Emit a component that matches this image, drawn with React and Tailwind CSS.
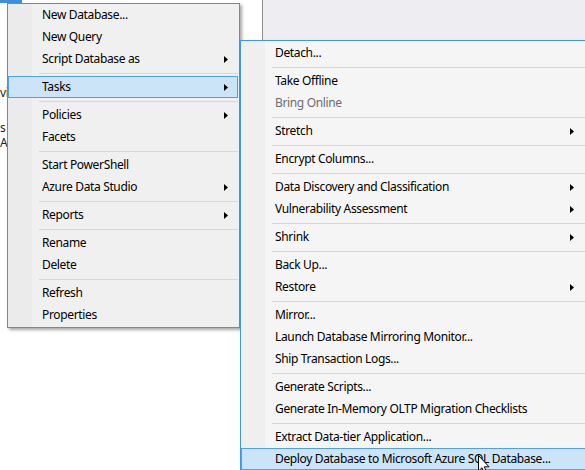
import React from "react";

const leftItems = [
  { t: "New Database..." },
  { t: "New Query" },
  { t: "Script Database as", sub: true },
  "sep",
  { t: "Tasks", sub: true, hl: true },
  "sep",
  { t: "Policies", sub: true },
  { t: "Facets" },
  "sep",
  { t: "Start PowerShell" },
  { t: "Azure Data Studio", sub: true },
  "sep",
  { t: "Reports", sub: true },
  "sep",
  { t: "Rename" },
  { t: "Delete" },
  "sep",
  { t: "Refresh" },
  { t: "Properties" },
];

const rightItems = [
  { t: "Detach..." },
  "sep",
  { t: "Take Offline" },
  { t: "Bring Online", dis: true },
  "sep",
  { t: "Stretch", sub: true },
  "sep",
  { t: "Encrypt Columns..." },
  "sep",
  { t: "Data Discovery and Classification", sub: true },
  { t: "Vulnerability Assessment", sub: true },
  "sep",
  { t: "Shrink", sub: true },
  "sep",
  { t: "Back Up..." },
  { t: "Restore", sub: true },
  "sep",
  { t: "Mirror..." },
  { t: "Launch Database Mirroring Monitor..." },
  { t: "Ship Transaction Logs..." },
  "sep",
  { t: "Generate Scripts..." },
  { t: "Generate In-Memory OLTP Migration Checklists" },
  "sep",
  { t: "Extract Data-tier Application..." },
  { t: "Deploy Database to Microsoft Azure SQL Database...", hl: true },
];

function Arrow() {
  return (
    <svg width="4" height="7" viewBox="0 0 4 7" className="shrink-0">
      <path d="M0 0 L4 3.5 L0 7 Z" fill="#000" />
    </svg>
  );
}

function MenuList({ items, arrowPad }) {
  return (
    <>
      {items.map((it, i) =>
        it === "sep" ? (
          <div key={i} className="h-[6px] flex items-center pl-[31px] pr-px">
            <div className="h-px w-full bg-[#d7d7d7]" />
          </div>
        ) : (
          <div
            key={i}
            className={
              "h-[22px] mr-px flex items-center pl-[33px] border " +
              (it.hl
                ? "bg-[#cce4f7] border-[#4fa0ea]"
                : "border-transparent")
            }
          >
            <span
              className={
                "flex-1 whitespace-nowrap pb-px " +
                (it.dis ? "text-[#6d6d6d]" : "text-[#000]")
              }
            >
              {it.t}
            </span>
            {it.sub ? (
              <span className={arrowPad}>
                <Arrow />
              </span>
            ) : null}
          </div>
        )
      )}
    </>
  );
}

export default function App() {
  return (
    <div className="relative w-[585px] h-[470px] overflow-hidden bg-white text-[12px] leading-none tracking-[-0.35px] font-['Noto_Sans',sans-serif]">
      {/* background window */}
      <div className="flex h-full">
        <div className="w-[262px] h-full bg-white flex flex-col">
          <div className="w-[22px] h-[3px] bg-[#3d8fdc]" />
          <div className="mt-[83px] text-[#1e1e1e] leading-[14px]">vi</div>
          <div className="mt-[20px] text-[#1e1e1e] leading-[15px]">
            s
            <br />
            A
          </div>
        </div>
        <div className="flex-1 h-full border-l border-[#8e8e8e] bg-[#eeeef2]" />
      </div>

      {/* left context menu */}
      <div className="absolute left-[7px] top-[3px] w-[233px] border border-[#3d97ee] pb-px bg-[linear-gradient(to_right,#ebebeb_24px,#f0f0f0_24px)] shadow-[2px_2px_3px_rgba(0,0,0,0.35)]">
        <MenuList items={leftItems} arrowPad="pr-[9px]" />
      </div>

      {/* right submenu */}
      <div className="absolute left-[240px] top-[40px] w-[348px] border border-[#3d97ee] pt-px bg-[linear-gradient(to_right,#efefef_24px,#f5f5f5_24px)] shadow-[2px_2px_3px_rgba(0,0,0,0.35)]">
        <MenuList items={rightItems} arrowPad="pr-[11px]" />
      </div>

      {/* mouse cursor */}
      <svg
        className="absolute left-[478px] top-[455px]"
        width="13"
        height="20"
        viewBox="0 0 13 20"
      >
        <path
          d="M0.5 0.5 L0.5 16 L4 12.7 L6.6 18.6 L8.8 17.6 L6.3 11.8 L11 11.8 Z"
          fill="#fff"
          stroke="#000"
          strokeWidth="1"
          strokeLinejoin="miter"
        />
      </svg>
    </div>
  );
}
